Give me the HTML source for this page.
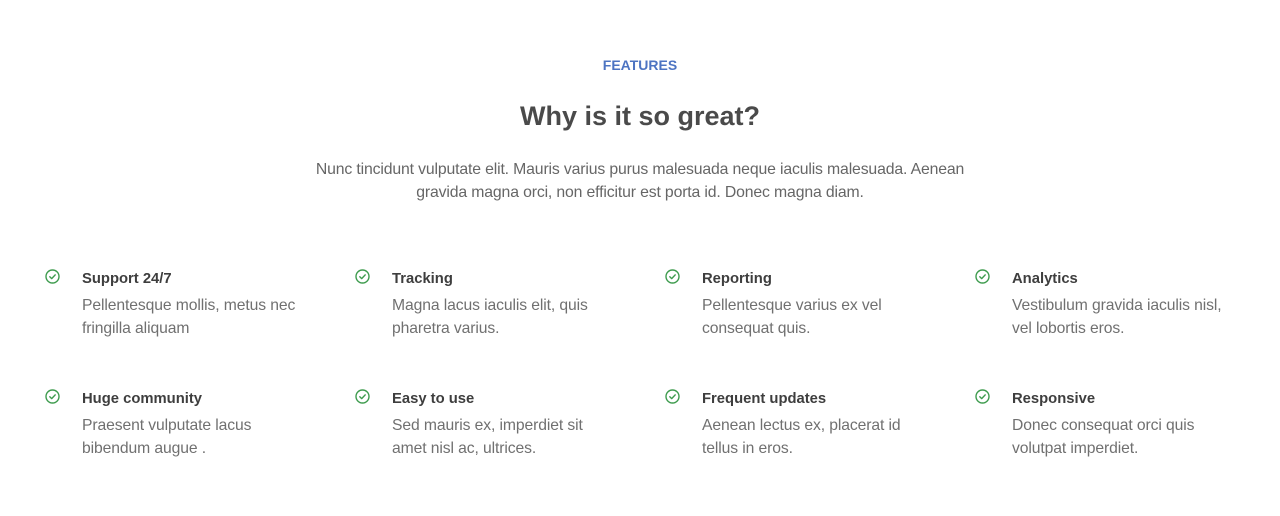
<!DOCTYPE html>
<html><head><meta charset="utf-8"><style>
*{margin:0;padding:0;box-sizing:border-box}
body{width:1280px;height:516px;background:#fff;font-family:"Liberation Sans",Arial,sans-serif;position:relative;overflow:hidden}
.a{position:absolute;white-space:nowrap}
.kick{left:0;width:1280px;text-align:center;top:56px;font-size:14px;font-weight:bold;color:#4d74c2;line-height:18px}
.h{left:0;width:1280px;text-align:center;top:99px;font-size:27px;font-weight:bold;color:#4a4a4a;line-height:34px}
.p{left:0;width:1280px;text-align:center;font-size:15.8px;color:#666;line-height:23px;top:158px;letter-spacing:-0.15px}
.f{position:absolute;width:300px}
.f svg{position:absolute;left:0;top:1px}
.t{position:absolute;left:37px;top:2px;font-size:14.8px;font-weight:bold;color:#3e3e3e;line-height:18px;white-space:nowrap}
.d{position:absolute;left:37px;top:26px;font-size:15.7px;color:#707070;line-height:23px;white-space:nowrap;letter-spacing:-0.1px}
</style></head><body>
<div class="a kick">FEATURES</div>
<div class="a h">Why is it so great?</div>
<div class="a p">Nunc tincidunt vulputate elit. Mauris varius purus malesuada neque iaculis malesuada. Aenean<br>gravida magna orci, non efficitur est porta id. Donec magna diam.</div>

<div class="f" style="left:45px;top:268px"><svg width="15" height="15" viewBox="0 0 15 15"><circle cx="7.5" cy="7.5" r="6.5" fill="none" stroke="#3f9c4f" stroke-width="1.4"/><path d="M4.8 7.7l1.9 1.9 3.5-3.7" fill="none" stroke="#3f9c4f" stroke-width="1.4" stroke-linecap="round" stroke-linejoin="round"/></svg><div class="t">Support 24/7</div><div class="d">Pellentesque mollis, metus nec<br>fringilla aliquam</div></div>
<div class="f" style="left:355px;top:268px"><svg width="15" height="15" viewBox="0 0 15 15"><circle cx="7.5" cy="7.5" r="6.5" fill="none" stroke="#3f9c4f" stroke-width="1.4"/><path d="M4.8 7.7l1.9 1.9 3.5-3.7" fill="none" stroke="#3f9c4f" stroke-width="1.4" stroke-linecap="round" stroke-linejoin="round"/></svg><div class="t">Tracking</div><div class="d">Magna lacus iaculis elit, quis<br>pharetra varius.</div></div>
<div class="f" style="left:665px;top:268px"><svg width="15" height="15" viewBox="0 0 15 15"><circle cx="7.5" cy="7.5" r="6.5" fill="none" stroke="#3f9c4f" stroke-width="1.4"/><path d="M4.8 7.7l1.9 1.9 3.5-3.7" fill="none" stroke="#3f9c4f" stroke-width="1.4" stroke-linecap="round" stroke-linejoin="round"/></svg><div class="t">Reporting</div><div class="d">Pellentesque varius ex vel<br>consequat quis.</div></div>
<div class="f" style="left:975px;top:268px"><svg width="15" height="15" viewBox="0 0 15 15"><circle cx="7.5" cy="7.5" r="6.5" fill="none" stroke="#3f9c4f" stroke-width="1.4"/><path d="M4.8 7.7l1.9 1.9 3.5-3.7" fill="none" stroke="#3f9c4f" stroke-width="1.4" stroke-linecap="round" stroke-linejoin="round"/></svg><div class="t">Analytics</div><div class="d">Vestibulum gravida iaculis nisl,<br>vel lobortis eros.</div></div>

<div class="f" style="left:45px;top:388px"><svg width="15" height="15" viewBox="0 0 15 15"><circle cx="7.5" cy="7.5" r="6.5" fill="none" stroke="#3f9c4f" stroke-width="1.4"/><path d="M4.8 7.7l1.9 1.9 3.5-3.7" fill="none" stroke="#3f9c4f" stroke-width="1.4" stroke-linecap="round" stroke-linejoin="round"/></svg><div class="t">Huge community</div><div class="d">Praesent vulputate lacus<br>bibendum augue .</div></div>
<div class="f" style="left:355px;top:388px"><svg width="15" height="15" viewBox="0 0 15 15"><circle cx="7.5" cy="7.5" r="6.5" fill="none" stroke="#3f9c4f" stroke-width="1.4"/><path d="M4.8 7.7l1.9 1.9 3.5-3.7" fill="none" stroke="#3f9c4f" stroke-width="1.4" stroke-linecap="round" stroke-linejoin="round"/></svg><div class="t">Easy to use</div><div class="d">Sed mauris ex, imperdiet sit<br>amet nisl ac, ultrices.</div></div>
<div class="f" style="left:665px;top:388px"><svg width="15" height="15" viewBox="0 0 15 15"><circle cx="7.5" cy="7.5" r="6.5" fill="none" stroke="#3f9c4f" stroke-width="1.4"/><path d="M4.8 7.7l1.9 1.9 3.5-3.7" fill="none" stroke="#3f9c4f" stroke-width="1.4" stroke-linecap="round" stroke-linejoin="round"/></svg><div class="t">Frequent updates</div><div class="d">Aenean lectus ex, placerat id<br>tellus in eros.</div></div>
<div class="f" style="left:975px;top:388px"><svg width="15" height="15" viewBox="0 0 15 15"><circle cx="7.5" cy="7.5" r="6.5" fill="none" stroke="#3f9c4f" stroke-width="1.4"/><path d="M4.8 7.7l1.9 1.9 3.5-3.7" fill="none" stroke="#3f9c4f" stroke-width="1.4" stroke-linecap="round" stroke-linejoin="round"/></svg><div class="t">Responsive</div><div class="d">Donec consequat orci quis<br>volutpat imperdiet.</div></div>
</body></html>
